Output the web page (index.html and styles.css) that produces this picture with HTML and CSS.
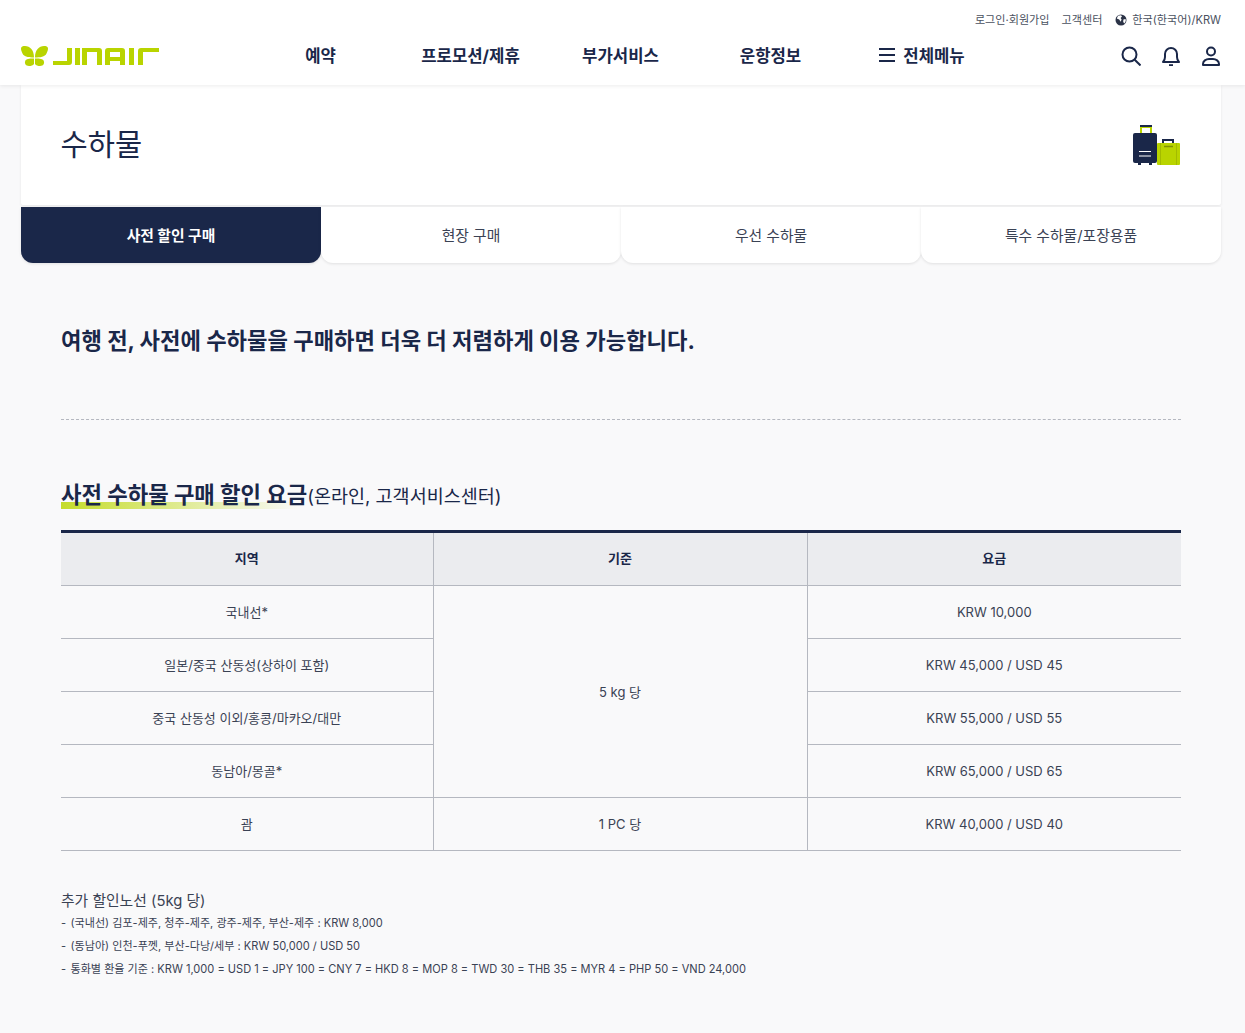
FILE: index.html
```html
<!DOCTYPE html>
<html lang="ko">
<head>
    <meta charset="UTF-8">
    <title>수하물</title>
    <link rel="stylesheet" href="styles.css">
</head>
<body>
    <!-- Header -->
    <header class="header">
        <div class="util">
            <a href="#">로그인·회원가입</a>
            <a href="#">고객센터</a>
            <a href="#" class="lang">
                <svg viewBox="0 0 12 12" width="12" height="12"><circle cx="6" cy="6" r="5.5" fill="#2b3347"/><path d="M3 1.800l3-.6 1 1.400-1.400 1.400 1 1.400-1 2.400-1.400-2.200L1.800 4.600zM8.400 5.600l2.200-.6.200 2-1.400 2.400-1.200-1.400z" fill="#fff"/></svg>
                한국(한국어)/KRW
            </a>
        </div>
        <div class="nav-row">
            <a href="#" class="logo">
                <svg viewBox="0 0 138 20" width="138" height="20">
                    <g fill="#b9d400">
                        <path d="M0 2.500C0 .5 2 0 4 0c5 0 9 4 9 11.500C8 11.500 3 11 1.500 7.500 .5 5.500 0 4 0 2.500z"/>
                        <path d="M27 2.500C27 .5 25 0 23 0c-5 0-9 4-9 11.500 5 0 10-.5 11.500-4 1-2 1.500-3.500 1.500-5z"/>
                        <path d="M13 12.500V18c-1 1.500-3 2-5 2-3.500 0-5-3-3.500-5.500 1.500-2 5.500-2 8.500-2z"/>
                        <path d="M14 12.500V18c1 1.500 3 2 5 2 3.500 0 5-3 3.500-5.500-1.500-2-5.500-2-8.500-2z"/>
                        <path d="M32 15h14V2h5v14c0 2-1 3-3 3H32z"/>
                        <path d="M54 2h5v17h-5z"/>
                        <path d="M61 2h17c2 0 3 1 3 3v14h-5V6H66v13h-5z"/>
                        <path d="M84 5c0-2 1-3 3-3h14c2 0 3 1 3 3v14h-5v-4H89v4h-5zm5 1v5h10V6z"/>
                        <path d="M108 2h5v17h-5z"/>
                        <path d="M117 5c0-2 1-3 3-3h18v4h-16v13h-5z"/>
                    </g>
                </svg>
            </a>
            <nav class="gnb">
                <a href="#">예약</a>
                <a href="#">프로모션/제휴</a>
                <a href="#">부가서비스</a>
                <a href="#">운항정보</a>
                <a href="#" class="all-menu">
                    <svg viewBox="0 0 16 14" width="16" height="14"><path d="M0 1h16M0 7h16M0 13h16" stroke="#1a2749" stroke-width="1.800" fill="none"/></svg>
                    전체메뉴
                </a>
            </nav>
            <div class="icons">
                <svg viewBox="0 0 20 20" width="20" height="20" fill="none" stroke="#1a2749" stroke-width="2"><circle cx="8.500" cy="8.500" r="7"/><path d="M13.700 13.700L19.500 19.500"/></svg>
                <svg viewBox="0 0 20 20" width="20" height="20" fill="none" stroke="#1a2749" stroke-width="2"><path d="M2 16c1.500-1.500 2-3 2-5V8a6 6 0 0 1 12 0v3c0 2 .5 3.500 2 5z" stroke-linejoin="round"/><path d="M8 19.200h4"/></svg>
                <svg viewBox="0 0 20 20" width="20" height="20" fill="none" stroke="#1a2749" stroke-width="2"><circle cx="10" cy="5.500" r="4"/><path d="M2 19v-1c0-3 3-5 6-5h4c3 0 6 2 6 5v1z" stroke-linejoin="round"/></svg>
            </div>
        </div>
    </header>

    <!-- Page title -->
    <main class="wrap">
        <div class="title-box">
            <h1>수하물</h1>
            <svg class="bag-icon" viewBox="0 0 48 42" width="48" height="42">
                <path d="M8 8V2h10v6" fill="none" stroke="#b9d400" stroke-width="2"/>
                <path d="M7 1h12" stroke="#1a2749" stroke-width="2"/>
                <rect x="0" y="8" width="24" height="30" rx="2" fill="#1a2749"/>
                <path d="M6 26.500h12M6 31h12" stroke="#fff" stroke-width="1"/>
                <path d="M5 38h3v2H5zM16 38h3v2h-3z" fill="#1a2749"/>
                <path d="M30 18v-3h10v3" fill="none" stroke="#1a2749" stroke-width="2"/>
                <rect x="24" y="18" width="23" height="22" rx="1" fill="#b9d400"/>
                <path d="M31 21.500h9" stroke="#7f9200" stroke-width="1.500"/>
                <path d="M27.500 18v22M43.500 18v22" stroke="#a3bb00" stroke-width="1"/>
            </svg>
        </div>

        <div class="tabs">
            <a href="#" class="tab active">사전 할인 구매</a>
            <a href="#" class="tab">현장 구매</a>
            <a href="#" class="tab">우선 수하물</a>
            <a href="#" class="tab">특수 수하물/포장용품</a>
        </div>

        <section class="content">
            <h2 class="lead">여행 전, 사전에 수하물을 구매하면 더욱 더 저렴하게 이용 가능합니다.</h2>
            <hr class="dash">

            <h3 class="sub-title"><strong>사전 수하물 구매 할인 요금</strong>(온라인, 고객서비스센터)</h3>

            <table class="fare">
                <thead>
                    <tr><th>지역</th><th>기준</th><th>요금</th></tr>
                </thead>
                <tbody>
                    <tr><td>국내선*</td><td rowspan="4">5 kg 당</td><td>KRW 10,000</td></tr>
                    <tr><td>일본/중국 산동성(상하이 포함)</td><td>KRW 45,000 / USD 45</td></tr>
                    <tr><td>중국 산동성 이외/홍콩/마카오/대만</td><td>KRW 55,000 / USD 55</td></tr>
                    <tr><td>동남아/몽골*</td><td>KRW 65,000 / USD 65</td></tr>
                    <tr><td>괌</td><td>1 PC 당</td><td>KRW 40,000 / USD 40</td></tr>
                </tbody>
            </table>

            <div class="notes">
                <h4>추가 할인노선 (5kg 당)</h4>
                <ul>
                    <li>(국내선) 김포-제주, 청주-제주, 광주-제주, 부산-제주 : KRW 8,000</li>
                    <li>(동남아) 인천-푸껫, 부산-다낭/세부 : KRW 50,000 / USD 50</li>
                    <li>통화별 환율 기준 : KRW 1,000 = USD 1 = JPY 100 = CNY 7 = HKD 8 = MOP 8 = TWD 30 = THB 35 = MYR 4 = PHP 50 = VND 24,000</li>
                </ul>
            </div>
        </section>
    </main>
</body>
</html>
```

FILE: styles.css
```css
* {
    margin: 0;
    padding: 0;
    box-sizing: border-box;
}

body {
    font-family: Inter, 'Noto Sans CJK KR', sans-serif;
    background-color: #f9f9fa;
    color: #1a2749;
    height: 1033px;
    overflow: hidden;
}

a {
    color: inherit;
    text-decoration: none;
}

/* Header */
.header {
    height: 85px;
    background: #fff;
    box-shadow: 0 1px 4px rgba(0, 0, 0, 0.08);
    padding: 0 24px 0 21px;
    position: relative;
}

.util {
    display: flex;
    justify-content: flex-end;
    align-items: flex-start;
    gap: 12px;
    height: 40px;
    padding-top: 12px;
    font-size: 11.1px;
    line-height: 16px;
    color: #4a5160;
}

.lang {
    display: flex;
    align-items: center;
    gap: 5px;
    margin-left: 1px;
}

.nav-row {
    display: flex;
    align-items: center;
    height: 32px;
}

.logo {
    display: flex;
    width: 138px;
}

.gnb {
    display: flex;
    margin-left: 86.5px;
    padding-bottom: 3px;
    font-size: 16.7px;
    font-weight: 700;
}

.gnb a {
    width: 150px;
    text-align: center;
    display: flex;
    justify-content: center;
    align-items: center;
    gap: 8px;
}

.gnb .all-menu {
    margin-left: 1.5px;
}

.icons {
    margin-left: auto;
    display: flex;
    gap: 20px;
}

/* Title */
.wrap {
    width: 1200px;
    margin: 0 0 0 21px;
}

.title-box {
    height: 120px;
    background: #fff;
    border-radius: 0 0 2px 2px;
    padding: 0 40px;
    display: flex;
    justify-content: space-between;
    align-items: center;
    box-shadow: 0 1px 3px rgba(0, 0, 0, 0.08);
}

.title-box h1 {
    font-size: 29.6px;
    font-weight: 400;
    color: #1a2749;
    margin-left: -0.5px;
    padding-bottom: 5px;
}

.bag-icon {
    margin-top: 2px;
}

/* Tabs */
.tabs {
    display: flex;
    margin-top: 2px;
}

.tab {
    flex: 1;
    height: 56px;
    padding-bottom: 2px;
    background: #fff;
    border-radius: 0 0 12px 12px;
    box-shadow: 0 1px 3px rgba(0, 0, 0, 0.1);
    display: flex;
    align-items: center;
    justify-content: center;
    font-size: 14.8px;
    color: #3a4254;
}

.tab.active {
    background: #1a2749;
    color: #fff;
    font-weight: 700;
}

/* Content */
.content {
    padding: 0 40px;
}

.lead {
    font-size: 22.22px;
    font-weight: 700;
    line-height: 34px;
    margin-top: 61px;
}

.dash {
    border: none;
    border-top: 1px dashed #b5b8c0;
    margin-top: 61px;
}

.sub-title {
    font-size: 18.5px;
    font-weight: 400;
    line-height: 34px;
    margin-top: 58px;
}

.sub-title strong {
    font-size: 22.25px;
    font-weight: 700;
    background: linear-gradient(90deg, #c5dc2a, rgba(197, 220, 42, 0) 97%) no-repeat 0 100% / 100% 7px;
    padding-bottom: 1px;
}

/* Table */
.fare {
    width: 100%;
    table-layout: fixed;
    border-collapse: collapse;
    border-top: 3px solid #1a2749;
    margin-top: 17px;
    font-size: 13px;
}

.fare th {
    height: 54px;
    padding-bottom: 3px;
    background: #ebecef;
    font-weight: 700;
    font-size: 13px;
    border-bottom: 1px solid #b5b8c0;
}

.fare th:first-child {
    width: 372px;
}

.fare td {
    height: 53px;
    padding-bottom: 1px;
    text-align: center;
    color: #3a4254;
    border-bottom: 1px solid #b5b8c0;
}

.fare th + th,
.fare td + td {
    border-left: 1px solid #b5b8c0;
}

.fare tbody tr:nth-child(n+2):nth-child(-n+4) td:first-child {
    border-right: 1px solid #b5b8c0;
}

/* Notes */
.notes {
    margin-top: 40px;
    color: #3a4254;
}

.notes h4 {
    font-size: 14.8px;
    font-weight: 400;
    line-height: 20px;
}

.notes ul {
    list-style: none;
    margin-top: 1px;
}

.notes li {
    font-size: 11.07px;
    line-height: 23px;
    padding-left: 9.5px;
    position: relative;
}

.notes li::before {
    content: "-";
    position: absolute;
    left: 0;
}
```
